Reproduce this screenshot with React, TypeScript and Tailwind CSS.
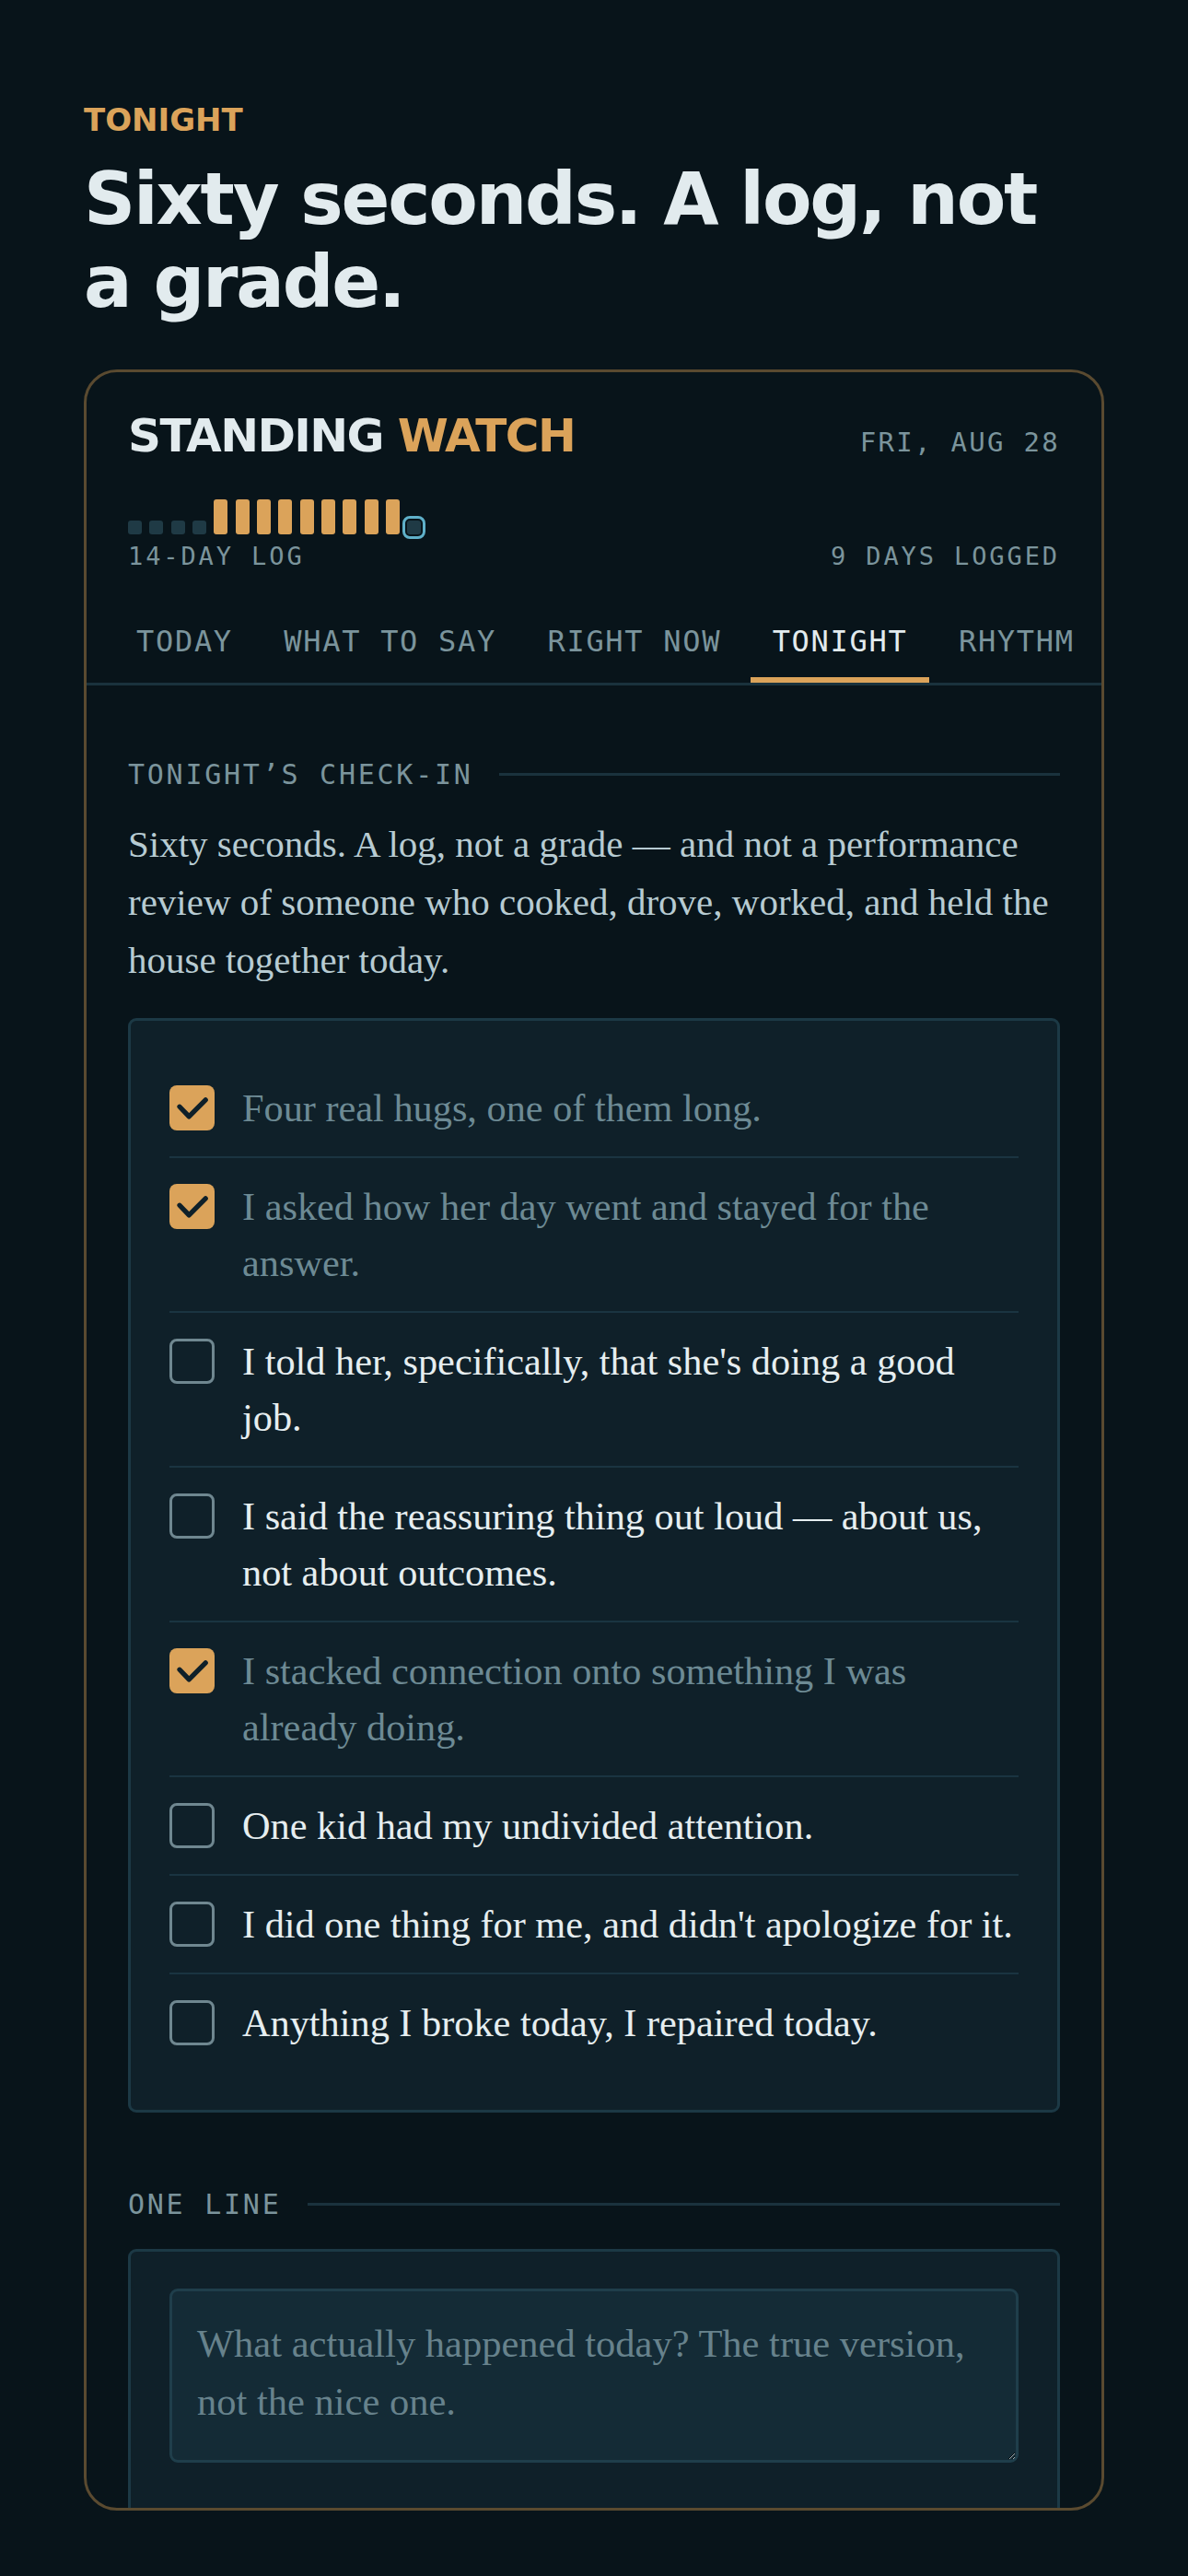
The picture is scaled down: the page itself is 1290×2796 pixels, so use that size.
import { useState } from "react";

const sans = { fontFamily: '"DejaVu Sans", Verdana, sans-serif' };
const mono = { fontFamily: '"DejaVu Sans Mono", "Liberation Mono", monospace' };
const serif = { fontFamily: '"Liberation Serif", "Times New Roman", serif' };

const tabs = ["TODAY", "WHAT TO SAY", "RIGHT NOW", "TONIGHT", "RHYTHM"];

const initialItems = [
  { text: "Four real hugs, one of them long.", done: true },
  { text: "I asked how her day went and stayed for the answer.", done: true },
  { text: "I told her, specifically, that she's doing a good job.", done: false },
  { text: "I said the reassuring thing out loud — about us, not about outcomes.", done: false },
  { text: "I stacked connection onto something I was already doing.", done: true },
  { text: "One kid had my undivided attention.", done: false },
  { text: "I did one thing for me, and didn't apologize for it.", done: false },
  { text: "Anything I broke today, I repaired today.", done: false },
];

// 14 days: 4 empty, 9 logged, today pending
const days = [0, 0, 0, 0, 1, 1, 1, 1, 1, 1, 1, 1, 1, 2];

function SectionLabel({ children }: { children: string }) {
  return (
    <div className="flex items-center gap-[28px]">
      <span style={mono} className="text-[30px] leading-[45px] tracking-[2.75px] text-[#7b949c]">
        {children}
      </span>
      <div className="h-[3px] flex-1 bg-[#1a323d]" />
    </div>
  );
}

function Box({ checked }: { checked: boolean }) {
  if (checked) {
    return (
      <span className="mt-[6px] flex h-[49px] w-[49px] shrink-0 items-center justify-center rounded-[8px] bg-[#dba35a]">
        <svg viewBox="0 0 24 24" className="h-[49px] w-[49px]" fill="none" stroke="#0f2029" strokeWidth="2.6" strokeLinecap="round" strokeLinejoin="round">
          <path d="M5.4 11.4 10.4 16.6 19.2 7.8" />
        </svg>
      </span>
    );
  }
  return <span className="mt-[6px] h-[49px] w-[49px] shrink-0 rounded-[8px] border-[3px] border-[#6f8790]" />;
}

export default function App() {
  const [items, setItems] = useState(initialItems);
  const [note, setNote] = useState("");

  const toggle = (i: number) =>
    setItems((prev) => prev.map((it, j) => (j === i ? { ...it, done: !it.done } : it)));

  return (
    <div className="min-h-[2796px] bg-[#08141a] px-[91px] pt-[105px]">
      <p style={sans} className="text-[34px] font-bold leading-[51px] text-[#dba35a]">
        TONIGHT
      </p>
      <h1 style={sans} className="mt-[15px] text-[78px] font-bold leading-[90px] tracking-[-2.2px] text-[#e2ebee]">
        Sixty seconds. A log, not a grade.
      </h1>

      <div className="mt-[50px] h-[2324px] overflow-hidden rounded-[36px] border-[3px] border-[#5a4a30] bg-[#08141a]">
        {/* header */}
        <div className="px-[45px] pt-[39px] pb-[34px]">
          <div className="flex items-baseline justify-between">
            <h2 style={sans} className="text-[50px] font-bold leading-[60px] tracking-[-1.6px] text-[#e2ebee]">
              STANDING <span className="text-[#dba35a]">WATCH</span>
            </h2>
            <span style={mono} className="text-[29px] leading-[40px] tracking-[2.3px] text-[#7b949c]">
              FRI, AUG 28
            </span>
          </div>

          <div className="mt-[39px] flex items-end justify-between">
            <div>
              <div className="flex h-[38px] items-end gap-[8.33px]">
                {days.map((d, i) =>
                  d === 1 ? (
                    <span key={i} className="h-[38px] w-[15px] rounded-[3px] bg-[#dba35a]" />
                  ) : d === 2 ? (
                    <span key={i} className="h-[15px] w-[15px] rounded-[3px] bg-[#1f3a45] outline-[3px] outline-offset-[2px] outline-[#5fb0c9] outline-solid" />
                  ) : (
                    <span key={i} className="h-[15px] w-[15px] rounded-[3px] bg-[#1f3a45]" />
                  )
                )}
              </div>
              <p style={mono} className="mt-[5px] text-[27px] leading-[38px] tracking-[2.9px] text-[#7b949c]">
                14-DAY LOG
              </p>
            </div>
            <p style={mono} className="text-[27px] leading-[38px] tracking-[2.9px] text-[#7b949c]">
              9 DAYS LOGGED
            </p>
          </div>
        </div>

        {/* tabs */}
        <div className="flex gap-[7.5px] overflow-hidden border-b-[3px] border-[#1a323d] pl-[30px]">
          {tabs.map((t) => (
            <button
              key={t}
              style={mono}
              className={
                t === "TONIGHT"
                  ? "shrink-0 border-b-[6px] border-[#dba35a] px-[24px] pt-[19px] pb-[19px] text-[32px] leading-[40px] tracking-[1.7px] whitespace-nowrap text-[#e2ebee]"
                  : "shrink-0 border-b-[6px] border-transparent px-[24px] pt-[19px] pb-[19px] text-[32px] leading-[40px] tracking-[1.7px] whitespace-nowrap text-[#7b949c]"
              }
            >
              {t}
            </button>
          ))}
        </div>

        {/* body */}
        <div className="px-[45px] pt-[74px]">
          <SectionLabel>TONIGHT’S CHECK-IN</SectionLabel>
          <p style={serif} className="mt-[22px] text-[41px] leading-[63px] text-[#b7cbd2]">
            Sixty seconds. A log, not a grade — and not a performance review of someone who cooked, drove, worked, and held the house together today.
          </p>

          <div className="mt-[31px] rounded-[9px] border-[3px] border-[#1c3945] bg-[#0f2029] p-[42px]">
            {items.map((it, i) => (
              <label
                key={i}
                onClick={() => toggle(i)}
                className={
                  i === 0
                    ? "flex cursor-pointer items-start gap-[30px] py-[22px]"
                    : "flex cursor-pointer items-start gap-[30px] border-t-[2px] border-[#1a3441] py-[22px]"
                }
              >
                <Box checked={it.done} />
                <span
                  style={serif}
                  className={
                    it.done
                      ? "text-[42.3px] leading-[61px] text-[#6d8a94]"
                      : "text-[42.3px] leading-[61px] text-[#e6eef0]"
                  }
                >
                  {it.text}
                </span>
              </label>
            ))}
          </div>

          <div className="mt-[77px]">
            <SectionLabel>ONE LINE</SectionLabel>
          </div>

          <div className="mt-[26px] rounded-[9px] border-[3px] border-[#1c3945] bg-[#0f2029] px-[42px] pt-[40px] pb-[80px]">
            <textarea
              value={note}
              onChange={(e) => setNote(e.target.value)}
              placeholder="What actually happened today? The true version, not the nice one."
              style={serif}
              className="block h-[189px] w-full rounded-[9px] border-[3px] border-[#1f3e4b] bg-[#142b36] px-[27px] pt-[25px] pb-[27px] text-[42.5px] leading-[63px] text-[#e6eef0] placeholder:text-[#67828c] focus:outline-none"
            />
          </div>
        </div>
      </div>
    </div>
  );
}
